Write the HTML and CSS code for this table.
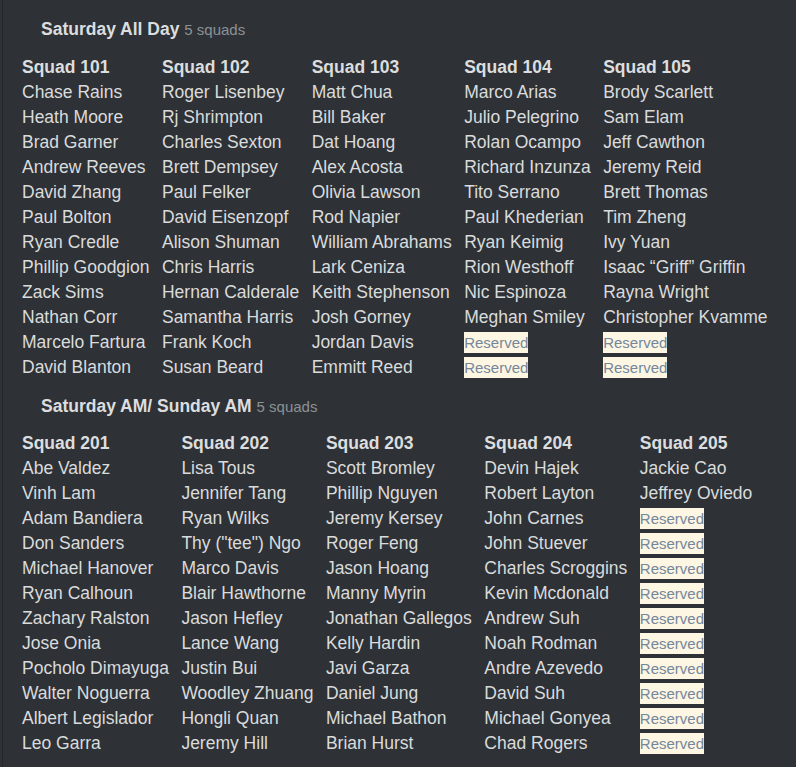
FILE: index.html
```html
<!DOCTYPE html>
<html>
<head>
<meta charset="utf-8">
<link rel="stylesheet" href="styles.css">
</head>
<body>
<div class="page">
  <section class="event first">
    <h2 class="event-title">Saturday All Day <span class="count">5 squads</span></h2>
    <div class="squads">
      <div class="squad">
        <div class="squad-name">Squad 101</div>
        <div>Chase Rains</div><div>Heath Moore</div><div>Brad Garner</div><div>Andrew Reeves</div><div>David Zhang</div><div>Paul Bolton</div><div>Ryan Credle</div><div>Phillip Goodgion</div><div>Zack Sims</div><div>Nathan Corr</div><div>Marcelo Fartura</div><div>David Blanton</div>
      </div>
      <div class="squad">
        <div class="squad-name">Squad 102</div>
        <div>Roger Lisenbey</div><div>Rj Shrimpton</div><div>Charles Sexton</div><div>Brett Dempsey</div><div>Paul Felker</div><div>David Eisenzopf</div><div>Alison Shuman</div><div>Chris Harris</div><div>Hernan Calderale</div><div>Samantha Harris</div><div>Frank Koch</div><div>Susan Beard</div>
      </div>
      <div class="squad">
        <div class="squad-name">Squad 103</div>
        <div>Matt Chua</div><div>Bill Baker</div><div>Dat Hoang</div><div>Alex Acosta</div><div>Olivia Lawson</div><div>Rod Napier</div><div>William Abrahams</div><div>Lark Ceniza</div><div>Keith Stephenson</div><div>Josh Gorney</div><div>Jordan Davis</div><div>Emmitt Reed</div>
      </div>
      <div class="squad">
        <div class="squad-name">Squad 104</div>
        <div>Marco Arias</div><div>Julio Pelegrino</div><div>Rolan Ocampo</div><div>Richard Inzunza</div><div>Tito Serrano</div><div>Paul Khederian</div><div>Ryan Keimig</div><div>Rion Westhoff</div><div>Nic Espinoza</div><div>Meghan Smiley</div><div><span class="reserved">Reserved</span></div><div><span class="reserved">Reserved</span></div>
      </div>
      <div class="squad">
        <div class="squad-name">Squad 105</div>
        <div>Brody Scarlett</div><div>Sam Elam</div><div>Jeff Cawthon</div><div>Jeremy Reid</div><div>Brett Thomas</div><div>Tim Zheng</div><div>Ivy Yuan</div><div>Isaac “Griff” Griffin</div><div>Rayna Wright</div><div>Christopher Kvamme</div><div><span class="reserved">Reserved</span></div><div><span class="reserved">Reserved</span></div>
      </div>
    </div>
  </section>
  <section class="event second">
    <h2 class="event-title">Saturday AM/ Sunday AM <span class="count">5 squads</span></h2>
    <div class="squads">
      <div class="squad">
        <div class="squad-name">Squad 201</div>
        <div>Abe Valdez</div><div>Vinh Lam</div><div>Adam Bandiera</div><div>Don Sanders</div><div>Michael Hanover</div><div>Ryan Calhoun</div><div>Zachary Ralston</div><div>Jose Onia</div><div>Pocholo Dimayuga</div><div>Walter Noguerra</div><div>Albert Legislador</div><div>Leo Garra</div>
      </div>
      <div class="squad">
        <div class="squad-name">Squad 202</div>
        <div>Lisa Tous</div><div>Jennifer Tang</div><div>Ryan Wilks</div><div>Thy ("tee") Ngo</div><div>Marco Davis</div><div>Blair Hawthorne</div><div>Jason Hefley</div><div>Lance Wang</div><div>Justin Bui</div><div>Woodley Zhuang</div><div>Hongli Quan</div><div>Jeremy Hill</div>
      </div>
      <div class="squad">
        <div class="squad-name">Squad 203</div>
        <div>Scott Bromley</div><div>Phillip Nguyen</div><div>Jeremy Kersey</div><div>Roger Feng</div><div>Jason Hoang</div><div>Manny Myrin</div><div>Jonathan Gallegos</div><div>Kelly Hardin</div><div>Javi Garza</div><div>Daniel Jung</div><div>Michael Bathon</div><div>Brian Hurst</div>
      </div>
      <div class="squad">
        <div class="squad-name">Squad 204</div>
        <div>Devin Hajek</div><div>Robert Layton</div><div>John Carnes</div><div>John Stuever</div><div>Charles Scroggins</div><div>Kevin Mcdonald</div><div>Andrew Suh</div><div>Noah Rodman</div><div>Andre Azevedo</div><div>David Suh</div><div>Michael Gonyea</div><div>Chad Rogers</div>
      </div>
      <div class="squad">
        <div class="squad-name">Squad 205</div>
        <div>Jackie Cao</div><div>Jeffrey Oviedo</div><div><span class="reserved">Reserved</span></div><div><span class="reserved">Reserved</span></div><div><span class="reserved">Reserved</span></div><div><span class="reserved">Reserved</span></div><div><span class="reserved">Reserved</span></div><div><span class="reserved">Reserved</span></div><div><span class="reserved">Reserved</span></div><div><span class="reserved">Reserved</span></div><div><span class="reserved">Reserved</span></div><div><span class="reserved">Reserved</span></div>
      </div>
    </div>
  </section>
</div>
</body>
</html>
```
FILE: styles.css
```css
html, body {
  margin: 0;
  padding: 0;
  background: #2e3236;
}
body {
  font-family: "Liberation Sans", Arial, sans-serif;
  color: #dadbdc;
  font-size: 17.5px;
  line-height: 25px;
}
.page {
  margin-left: 2px;
  border-left: 1px solid #24272a;
  min-height: 767px;
  padding-left: 19px;
  padding-top: 17px;
}
.event-title {
  margin: 0;
  padding-left: 19px;
  font-size: 17.5px;
  line-height: 25px;
  font-weight: bold;
  color: #dcdddf;
}
.count {
  font-weight: normal;
  font-size: 15px;
  color: #8c9196;
}
.second {
  margin-top: 14px;
}
.squads {
  display: flex;
  gap: 12.5px;
  margin-top: 13px;
}
.second .squads {
  margin-top: 12px;
}
.squad-name {
  font-weight: bold;
  color: #dcdddf;
}
.reserved {
  background: #fdf6e3;
  color: #74879b;
  font-size: 15px;
  padding: 2px 0;
}
```
